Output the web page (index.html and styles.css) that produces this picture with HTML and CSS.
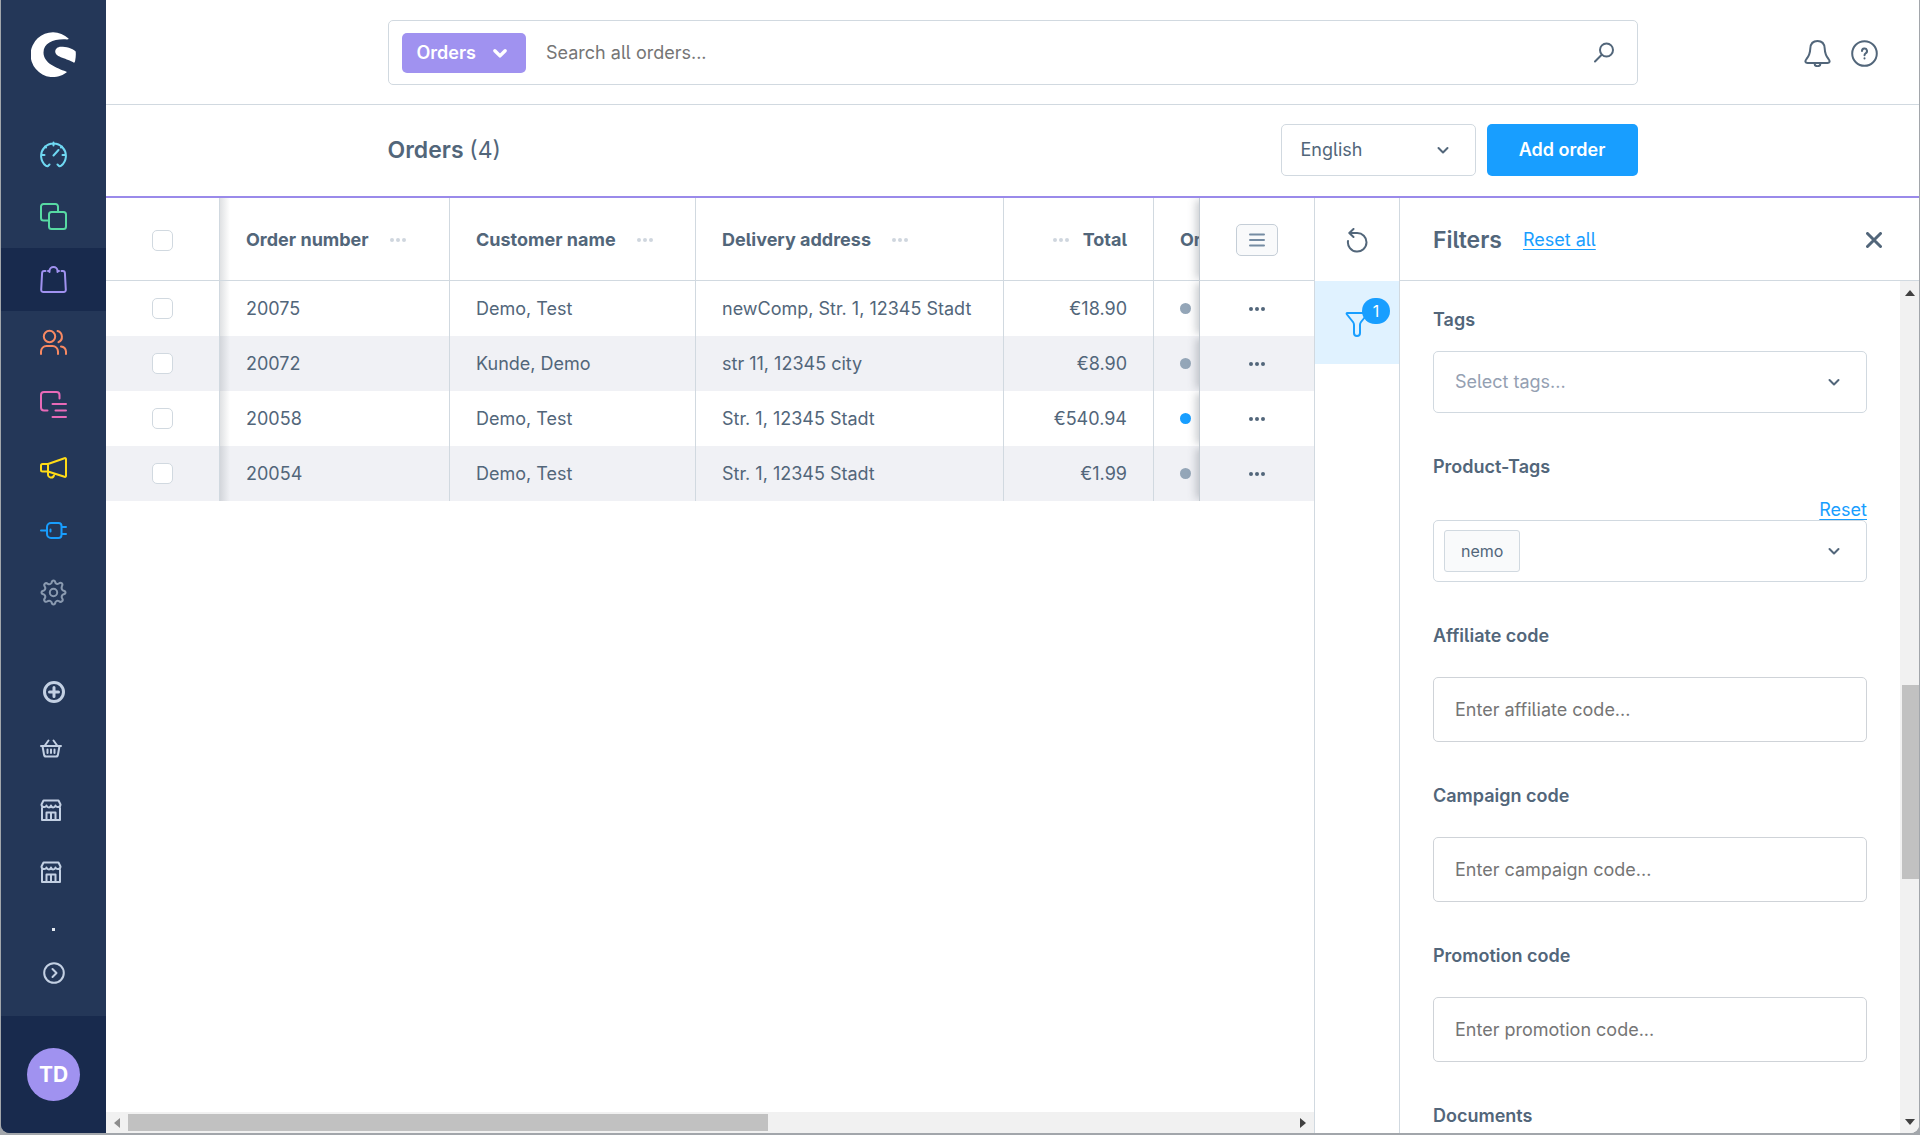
FILE: index.html
```html
<!DOCTYPE html>
<html lang="en">
<head>
<meta charset="utf-8">
<meta name="viewport" content="width=device-width, initial-scale=1">
<title>Orders</title>
<link rel="stylesheet" href="styles.css">
</head>
<body>
<svg class="symbols" aria-hidden="true">
  <symbol id="chevron" viewBox="0 0 14 14"><path d="M2.500 5l4.500 4.500L11.500 5"/></symbol>
  <symbol id="dots" viewBox="0 0 18 6"><circle cx="3" cy="3" r="2"/><circle cx="9" cy="3" r="2"/><circle cx="15" cy="3" r="2"/></symbol>
  <symbol id="store" viewBox="0 0 22 22"><path d="M3.500 1.500h15l2 4c0 3-4 3.500-5 1-1 2.500-4 2.500-4.500 0-.5 2.500-3.500 2.500-4.500 0-1 2.500-5 2-5-1zM2 9v12h18V9M6.500 21v-7.500h9V21M11 13.500V21"/></symbol>
</svg>
<div class="app">
  <aside class="sidebar">
    <a class="logo" href="#" aria-label="Home">
      <svg viewBox="0 0 45 45"><path fill="#fff" d="M37.500 6.500A22.400 22.400 0 1 0 35.500 40.500C36 40 35.500 39.700 35 39.500 26 36 12.500 31.500 12.500 20.500 12.500 10.500 24 6.500 36 7.500 37 7.600 38 7.200 37.500 6.500zM44.700 19.500C41 16 35 14.700 30 14.700 26.500 14.700 24.200 17 24.200 19.500 24.200 25.500 37 26.500 42.500 30.500 43.500 31 44 30 44.200 28.500 44.800 25.500 45 22.500 44.700 19.500z"/></svg>
    </a>
    <nav class="nav">
      <a class="nav-item cyan" href="#" aria-label="Dashboard"><svg viewBox="0 0 27 27"><path d="M9.500 23.500L8 25Q7 25.500 5.800 24.600A12.400 12.400 0 1 1 21.200 24.600Q20 25.500 19 25L17.500 23.500M13.500 1.500v3M1.500 14h3M22.500 14h3M13.500 14.500l5-5.500M5 5.500l1 1M22 5.500l-1 1"/></svg></a>
      <a class="nav-item green" href="#" aria-label="Catalogues"><svg viewBox="0 0 27 27"><path d="M9 17.500H3.500a2.500 2.500 0 0 1-2.500-2.500V3.500A2.500 2.500 0 0 1 3.500 1H15.500A2.500 2.500 0 0 1 18 3.500V9"/><rect x="9" y="9" width="17" height="17" rx="2.500"/></svg></a>
      <a class="nav-item purple active" href="#" aria-label="Orders"><svg viewBox="0 0 27 27"><path d="M5.500 5H4.200Q2.200 5 2.100 7L1.200 23.500Q1.100 26 3.500 26H23.500Q25.900 26 25.800 23.500L24.900 7Q24.800 5 22.800 5H21.500M9.500 6V5a4 4 0 0 1 8 0V6M8 5h1.500M17.500 5H19"/></svg></a>
      <a class="nav-item orange" href="#" aria-label="Customers"><svg viewBox="0 0 27 27"><circle cx="9.500" cy="7.500" r="5.700"/><path d="M1 25v-2.500A5.500 5.500 0 0 1 6.500 17h6A5.500 5.500 0 0 1 18 22.500V25M17.500 2a6 6 0 0 1 1 11.200M21 17.500a5.500 5.500 0 0 1 5 5V25"/></svg></a>
      <a class="nav-item pink" href="#" aria-label="Content"><svg viewBox="0 0 27 27"><path d="M7.500 19.500H4A3 3 0 0 1 1 16.500V4A3 3 0 0 1 4 1H16.500A3 3 0 0 1 19.500 4V7.500M12.500 13H26M15.500 19.500H26M12.500 26H26"/></svg></a>
      <a class="nav-item yellow" href="#" aria-label="Marketing"><svg viewBox="0 0 27 27"><path d="M8 10L24.500 4.200Q26 3.800 26 5.300V21.700Q26 23.200 24.500 22.800L8 17.500zM8 10H2.500Q1 10 1 11.500V16Q1 17.500 2.500 17.500H8M8 17.500V20a3 3 0 0 0 6 1L14.500 19.700"/></svg></a>
      <a class="nav-item blue" href="#" aria-label="Extensions"><svg viewBox="0 0 27 27"><path d="M11 6H18.500A3 3 0 0 1 21.500 9V18A3 3 0 0 1 18.500 21H11A4 4 0 0 1 7 17V10A4 4 0 0 1 11 6zM1 13.500H7M21.500 10H26M21.500 17H26M10.500 12.500v2"/></svg></a>
      <a class="nav-item gray" href="#" aria-label="Settings"><svg viewBox="0 0 27 27"><circle cx="13.500" cy="13.500" r="3.700"/><path d="M11.500 4Q12 1.500 13.500 1.500T15.500 4Q17 5.500 18.800 4.500 20.500 3 21.800 4.300T21.800 7.500Q21 10 23 11.500 25.500 12 25.500 13.500T23 15.500Q21 17 22 19 23.500 21 22 22.300T18.800 22Q17 21 15.500 23 15 25.500 13.500 25.500T11.500 23Q10 21 8 22 6 23.500 4.700 22.200T5 19Q6 17 4 15.500 1.500 15 1.500 13.500T4 11.500Q6 10 5 8 3.500 6 4.800 4.700T8 5Q10 6 11.500 4z"/></svg></a>
    </nav>
    <div class="shortcuts">
      <a class="shortcut centered" href="#" aria-label="Add sales channel"><svg viewBox="0 0 22 22"><circle cx="11" cy="11" r="9.500"/><path d="M11 6.500v9M6.500 11h9"/></svg></a>
      <a class="shortcut" href="#" aria-label="Shop"><svg viewBox="0 0 22 22"><path d="M1 9H21M2.500 9L4 17.500Q4.300 19.500 6 19.500H16Q17.700 19.500 18 17.500L19.500 9M4.500 9L8.500 3.500M17.500 9L13.500 3.500M7.500 12.500v3.500M11 12.500v3.500M14.500 12.500v3.500"/></svg></a>
      <a class="shortcut" href="#" aria-label="Storefront"><svg><use href="#store"/></svg></a>
      <a class="shortcut" href="#" aria-label="Second storefront"><svg><use href="#store"/></svg></a>
    </div>
    <div class="sidebar-foot">
      <span class="more-mark"></span>
      <button class="icon-button" type="button" aria-label="Expand menu"><svg class="icon-22" viewBox="0 0 22 22"><circle cx="11" cy="11" r="9.800"/><path d="M9.500 7l4 4-4 4"/></svg></button>
    </div>
    <div class="user"><button class="avatar" type="button">TD</button></div>
  </aside>

  <div class="main">
    <header class="topbar">
      <form class="search" role="search">
        <button class="search-type" type="button">Orders <svg><use href="#chevron"/></svg></button>
        <input type="text" aria-label="Search" placeholder="Search all orders...">
        <button class="icon-button" type="submit" aria-label="Search"><svg class="icon-22" viewBox="0 0 22 22"><circle cx="13.500" cy="8" r="6.500"/><path d="M8.700 12.800L2 19.500"/></svg></button>
      </form>
      <div class="topbar-actions">
        <button class="icon-button" type="button" aria-label="Notifications"><svg viewBox="0 0 27 27"><path d="M13.500 1C8.500 1 6.500 4.500 6.300 8.500 6.100 13 5.500 15.500 2.500 19 .5 21.500 1.500 23 3.500 23H23.500C25.500 23 26.500 21.500 24.500 19 21.500 15.500 20.900 13 20.700 8.500 20.500 4.500 18.500 1 13.500 1zM10.500 23.200a3 3 0 0 0 6 0"/></svg></button>
        <button class="icon-button" type="button" aria-label="Help"><svg viewBox="0 0 27 27"><circle cx="13.500" cy="13.500" r="12.300"/><path d="M11 11A2.500 2.500 0 1 1 14.600 13.300Q13.500 14 13.500 15.200M13.500 18.200V18.600"/></svg></button>
      </div>
    </header>

    <div class="smartbar">
      <div class="smartbar-inner">
        <h1>Orders <span>(4)</span></h1>
        <div class="field select-language">
          <select aria-label="Language"><option>English</option></select>
          <svg><use href="#chevron"/></svg>
        </div>
        <button class="primary" type="button">Add order</button>
      </div>
    </div>

    <div class="content">
      <section class="listing">
        <div class="table-wrap">
          <table>
            <colgroup><col class="c-check"><col class="c-number"><col class="c-name"><col class="c-address"><col class="c-total"><col class="c-status"><col class="c-actions"></colgroup>
            <thead>
              <tr>
                <th class="check"><input type="checkbox" aria-label="Select all"></th>
                <th class="shaded"><span class="head">Order number <svg><use href="#dots"/></svg></span></th>
                <th><span class="head">Customer name <svg><use href="#dots"/></svg></span></th>
                <th><span class="head">Delivery address <svg><use href="#dots"/></svg></span></th>
                <th><span class="head end"><svg><use href="#dots"/></svg> Total</span></th>
                <th>Order status</th>
                <th class="actions"><button class="columns-button" type="button" aria-label="Column settings"><svg viewBox="0 0 16 16"><path d="M1 2.500H15M1 8H15M1 13.500H15"/></svg></button></th>
              </tr>
            </thead>
            <tbody>
              <tr><td class="check"><input type="checkbox" aria-label="Select 20075"></td><td class="shaded">20075</td><td>Demo, Test</td><td>newComp, Str. 1, 12345 Stadt</td><td class="amount">€18.90</td><td><span class="status"></span></td><td class="actions"><button class="icon-button" type="button" aria-label="Actions"><svg class="row-dots"><use href="#dots"/></svg></button></td></tr>
              <tr><td class="check"><input type="checkbox" aria-label="Select 20072"></td><td class="shaded">20072</td><td>Kunde, Demo</td><td>str 11, 12345 city</td><td class="amount">€8.90</td><td><span class="status"></span></td><td class="actions"><button class="icon-button" type="button" aria-label="Actions"><svg class="row-dots"><use href="#dots"/></svg></button></td></tr>
              <tr><td class="check"><input type="checkbox" aria-label="Select 20058"></td><td class="shaded">20058</td><td>Demo, Test</td><td>Str. 1, 12345 Stadt</td><td class="amount">€540.94</td><td><span class="status open"></span></td><td class="actions"><button class="icon-button" type="button" aria-label="Actions"><svg class="row-dots"><use href="#dots"/></svg></button></td></tr>
              <tr><td class="check"><input type="checkbox" aria-label="Select 20054"></td><td class="shaded">20054</td><td>Demo, Test</td><td>Str. 1, 12345 Stadt</td><td class="amount">€1.99</td><td><span class="status"></span></td><td class="actions"><button class="icon-button" type="button" aria-label="Actions"><svg class="row-dots"><use href="#dots"/></svg></button></td></tr>
            </tbody>
          </table>
        </div>
        <div class="scroll-x">
          <svg class="faded" viewBox="0 0 6 10"><path d="M6 0v10L0 5z"/></svg>
          <div class="track-x"><div class="thumb-x"></div></div>
          <svg viewBox="0 0 6 10"><path d="M0 0v10l6-5z"/></svg>
        </div>
      </section>

      <div class="tools">
        <button class="tool" type="button" aria-label="Refresh"><svg viewBox="0 0 24 26"><path d="M3 13A9.300 9.300 0 1 0 12 5H4.500M8.500 1L4.300 5l4.200 4"/></svg></button>
        <button class="tool selected" type="button" aria-label="Filters"><svg viewBox="0 0 24 26"><path d="M2.500 2H21.500Q23 2 22 3.500L16 11Q15 12.300 15 14V22A3 3 0 0 1 9 22V14Q9 12.300 8 11L2 3.500Q1 2 2.500 2z"/></svg><span class="badge">1</span></button>
      </div>

      <aside class="filters">
        <header class="filters-head">
          <h2>Filters</h2>
          <a href="#">Reset all</a>
          <button class="icon-button" type="button" aria-label="Close"><svg viewBox="0 0 16 16"><path d="M1.500 1.500l13 13M14.500 1.500l-13 13"/></svg></button>
        </header>
        <div class="filters-body">
          <form class="filters-form">
            <div class="group">
              <label for="tags">Tags</label>
              <div class="field tall">
                <select id="tags" class="empty"><option>Select tags...</option></select>
                <svg><use href="#chevron"/></svg>
              </div>
            </div>
            <div class="group">
              <label for="product-tags">Product-Tags</label>
              <a class="reset" href="#">Reset</a>
              <div class="field tall multi">
                <span class="tag">nemo</span>
                <input id="product-tags" type="text">
                <svg><use href="#chevron"/></svg>
              </div>
            </div>
            <div class="group loose">
              <label for="affiliate">Affiliate code</label>
              <input id="affiliate" class="text" type="text" placeholder="Enter affiliate code...">
            </div>
            <div class="group loose">
              <label for="campaign">Campaign code</label>
              <input id="campaign" class="text" type="text" placeholder="Enter campaign code...">
            </div>
            <div class="group loose">
              <label for="promotion">Promotion code</label>
              <input id="promotion" class="text" type="text" placeholder="Enter promotion code...">
            </div>
            <div class="group"><span class="label">Documents</span></div>
          </form>
          <div class="scroll-y">
            <svg viewBox="0 0 10 6"><path d="M0 6h10L5 0z"/></svg>
            <div class="track-y"><div class="thumb-y"></div></div>
            <svg viewBox="0 0 10 6"><path d="M0 0h10L5 6z"/></svg>
          </div>
        </div>
      </aside>
    </div>
  </div>
</div>
</body>
</html>
```
FILE: styles.css
```css
:root {
  --text: #52667a;
  --line: #d1d9e0;
  --blue: #189eff;
  --purple: #a092f0;
  --navy: #243758;
  --navy-dark: #182a4d;
}

* { box-sizing: border-box; }

body {
  margin: 0;
  background: #a2a6ab;
  color: var(--text);
  font: 400 18px/24px Inter, "Liberation Sans", sans-serif;
  font-feature-settings: "cv05";
}

button, input, select { margin: 0; font: inherit; font-feature-settings: inherit; color: inherit; }
button { cursor: pointer; }
svg { display: block; flex: none; fill: none; stroke: currentColor; stroke-width: 2; stroke-linecap: round; stroke-linejoin: round; }
a { color: var(--blue); text-underline-offset: 3px; }
h1, h2 { margin: 0; font-size: 23px; line-height: 28px; font-weight: 600; }
h1 span { font-weight: 400; }
.symbols { position: absolute; width: 0; height: 0; }

.app {
  display: flex;
  height: 100vh;
  border: solid #a2a6ab;
  border-width: 0 1px 2px 1px;
  border-radius: 0 0 10px 10px;
  background: #fff;
  overflow: hidden;
}

.icon-button { display: flex; align-items: center; justify-content: center; padding: 0; border: 0; background: none; }
.icon-22 { width: 22px; height: 22px; }

/* Sidebar */
.sidebar { flex: none; width: 105px; display: flex; flex-direction: column; background: var(--navy); color: #c3d0e3; }
.logo { display: flex; justify-content: center; padding: 32px 0 46px; }
.logo svg { width: 45px; height: 45px; stroke: none; }
.nav { display: grid; grid-template-rows: repeat(8, 1fr); height: 501px; }
.nav-item { display: flex; align-items: center; justify-content: center; }
.nav-item svg { width: 27px; height: 27px; }
.active { background: var(--navy-dark); }
.cyan { color: #6fd8f2; }
.green { color: #57d9a3; }
.purple { color: var(--purple); }
.orange { color: #f88962; }
.pink { color: #e86ab8; }
.yellow { color: #ffdb17; }
.blue { color: var(--blue); }
.gray { color: #8a9ab0; }

.shortcuts { display: grid; grid-template-rows: 50px; grid-auto-rows: 62px; padding-top: 43px; }
.shortcut { display: flex; align-items: center; justify-content: center; padding-right: 5px; color: inherit; }
.shortcut.centered { padding-right: 0; }
.shortcut svg { width: 22px; height: 22px; }
.shortcut.centered svg { stroke-width: 3; }
.sidebar-foot { flex: 1; display: flex; flex-direction: column; align-items: center; justify-content: flex-end; gap: 31px; padding-bottom: 32px; }
.more-mark { width: 3px; height: 3px; background: #e3e9f2; }
.user { display: flex; justify-content: center; padding: 32px 0; background: var(--navy-dark); }
.avatar { width: 53px; height: 53px; padding: 0; border: 0; border-radius: 50%; background: var(--purple); color: #fff; font-size: 21px; font-weight: 700; }

/* Top bars */
.main { flex: 1; min-width: 0; display: flex; flex-direction: column; }
.topbar, .smartbar { display: grid; grid-template-columns: 1fr minmax(0, 1250px) 1fr; align-items: center; }
.topbar { height: 105px; border-bottom: 1px solid var(--line); }
.search { grid-column: 2; height: 65px; display: flex; align-items: center; padding: 2px 22px 0 13px; border: 1px solid var(--line); border-radius: 5px; }
.search input { flex: 1; min-width: 0; padding: 0 20px; border: 0; outline: 0; background: none; }
.search-type { display: flex; align-items: center; gap: 16px; height: 40px; padding: 0 18px 0 15px; border: 0; border-radius: 5px; background: var(--purple); color: #fff; font-weight: 600; }
.search-type svg { width: 16px; height: 16px; stroke-width: 3; }
.search .icon-22 { stroke-width: 2; }
.topbar-actions { display: flex; gap: 20px; justify-content: flex-end; padding: 2px 41px 0 0; }
.topbar-actions svg { width: 27px; height: 27px; }
::placeholder { color: #757575; opacity: 1; }

.smartbar { height: 93px; padding-bottom: 2px; border-bottom: 2px solid #9a8aea; }
.smartbar-inner { grid-column: 2; display: flex; align-items: center; gap: 11px; }
.smartbar h1 { margin-right: auto; }
.field { display: flex; align-items: center; height: 52px; border: 1px solid var(--line); border-radius: 5px; position: relative; background: #fff; }
.field select { appearance: none; width: 100%; height: 100%; padding: 0 19px; border: 0; border-radius: 5px; background: none; outline: 0; }
.field > svg { position: absolute; right: 25px; width: 14px; height: 14px; stroke-width: 2; pointer-events: none; }
.select-language { width: 195px; }
.primary { height: 52px; width: 151px; border: 0; border-radius: 5px; background: var(--blue); color: #fff; font-weight: 600; }

/* Orders table */
.content { flex: 1; min-height: 0; display: flex; }
.listing { flex: 1; min-width: 0; display: flex; flex-direction: column; }
.table-wrap { flex: 1; min-height: 0; overflow: hidden; }
table { width: 2200px; table-layout: fixed; border-collapse: separate; border-spacing: 0; }
.c-check { width: 114px; }
.c-number { width: 230px; }
.c-name { width: 246px; }
.c-address { width: 308px; }
.c-total { width: 150px; }
.c-actions { width: 115px; }
th, td { padding: 0 26px; border-right: 1px solid var(--line); text-align: left; white-space: nowrap; }
th { height: 83px; padding-top: 2px; border-bottom: 1px solid var(--line); font-weight: 700; background: #fff; }
td { height: 55px; background: #fff; }
tbody tr:nth-child(even) td { background: #f0f1f5; }
.head { display: flex; align-items: center; gap: 20px; }
.head svg { width: 18px; height: 6px; }
.head.end { justify-content: flex-end; gap: 13px; }
#dots { fill: currentColor; stroke: none; }
.head svg { color: #cfd6de; }
.amount { text-align: right; }
.check { padding-left: 0; padding-right: 0; text-align: center; }
.check input { appearance: none; display: block; width: 21px; height: 21px; margin: 0 auto; border: 1px solid var(--line); border-radius: 5px; background: #fff; }
th.shaded, td.shaded, tbody tr:nth-child(even) td.shaded { background-image: linear-gradient(to right, rgba(80, 90, 100, .18), rgba(80, 90, 100, 0) 10px); }
.status { display: block; width: 11px; height: 11px; border-radius: 50%; background: #94a6b8; }
.status.open { background: var(--blue); }
.actions { position: sticky; right: 0; padding-left: 0; padding-right: 0; border-right: 0; border-left: 1px solid #c3cad1; box-shadow: -5px 0 8px -2px rgba(80, 90, 100, .3); clip-path: inset(0 0 0 -12px); }
.actions button { margin: 0 auto; }
.row-dots { width: 18px; height: 6px; }
.columns-button { display: flex; align-items: center; justify-content: center; width: 42px; height: 32px; padding: 0; border: 1px solid #c5ced7; border-radius: 5px; background: #f9fafb; color: #758ca3; }
.columns-button svg { width: 16px; height: 16px; }

/* Scrollbars */
.scroll-x { display: flex; align-items: center; gap: 8px; height: 21px; padding: 0 8px; background: #f1f1f1; }
.scroll-x svg, .scroll-y svg { fill: #404040; stroke: none; }
.scroll-x svg { width: 6px; height: 10px; }
.scroll-x .faded { fill: #8c8c8c; }
.track-x { flex: 1; }
.thumb-x { width: 55%; height: 17px; background: #c1c1c1; }
.scroll-y { flex: none; display: flex; flex-direction: column; align-items: center; gap: 8px; width: 19px; padding: 9px 0 8px; background: #f1f1f1; }
.scroll-y svg { width: 10px; height: 6px; }
.track-y { flex: 1; align-self: stretch; display: flex; flex-direction: column; padding-left: 2px; }
.track-y::before { content: ""; flex: 385; }
.track-y::after { content: ""; flex: 234; }
.thumb-y { flex: 196; background: #c1c1c1; }

/* Tool strip and filter panel */
.tools { flex: none; width: 86px; display: flex; flex-direction: column; border: solid var(--line); border-width: 0 1px; }
.tool { position: relative; display: flex; align-items: center; justify-content: center; height: 83px; padding: 2px 0 0; border: 0; background: none; }
.tool svg { width: 24px; height: 26px; }
.selected { background: #e0f2ff; color: var(--blue); }
.badge { position: absolute; left: 47px; top: 17px; min-width: 28px; height: 26px; border-radius: 13px; background: var(--blue); color: #fff; font-size: 16px; line-height: 26px; text-align: center; }

.filters { flex: none; width: 519px; display: flex; flex-direction: column; }
.filters-head { display: flex; align-items: center; gap: 21px; height: 83px; padding: 2px 37px 0 33px; border-bottom: 1px solid var(--line); }
.filters-head .icon-button { margin-left: auto; }
.filters-head svg { width: 16px; height: 16px; stroke-width: 3; }
.filters-body { flex: 1; min-height: 0; display: flex; }
.filters-form { flex: 1; min-width: 0; padding: 27px 33px 0; overflow: hidden; }
.group { display: flex; flex-direction: column; gap: 19px; margin-bottom: 42px; }
.group label, .label { font-weight: 600; }
.group.loose { gap: 29px; }
.tall { height: 62px; }
.tall select { padding: 0 21px; }
.empty { color: #94a0b2; }
.reset { align-self: flex-end; margin-bottom: -21px; }
.multi { padding: 0 10px; }
.multi input { flex: 1; min-width: 0; height: 40px; border: 0; outline: 0; background: none; }
.tag { padding: 0 16px; border: 1px solid var(--line); border-radius: 3px; background: #f9fafb; font-size: 16px; line-height: 40px; }
.text { width: 100%; height: 65px; padding: 0 21px; border: 1px solid #cfd3d8; border-radius: 5px; background: #fff; outline: 0; }
```
